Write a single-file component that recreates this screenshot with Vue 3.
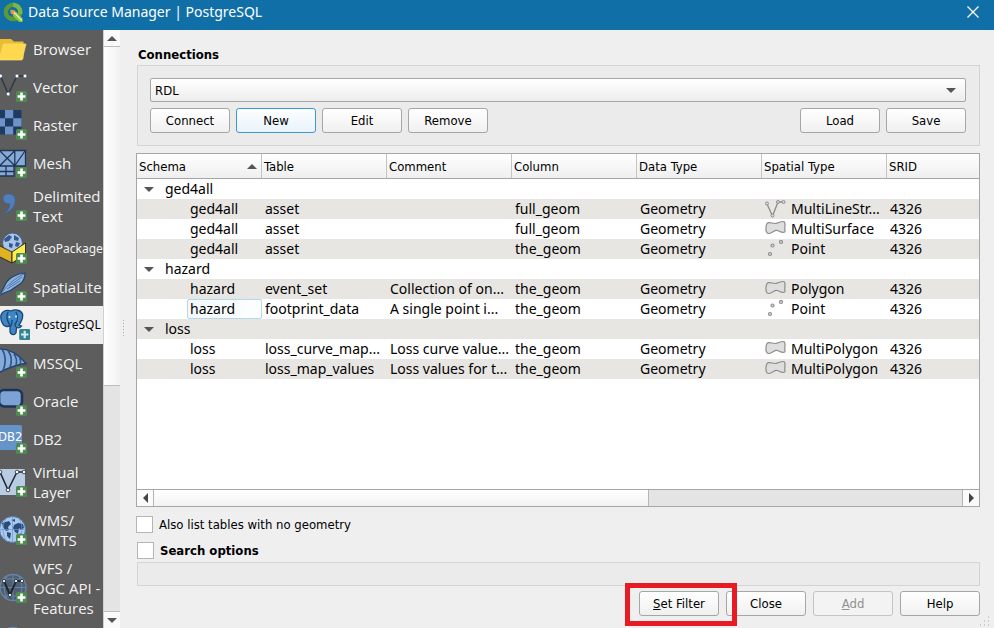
<script setup>
import { ref } from 'vue'

const sources = [
  { icon: 'browser', label: ['Browser'] },
  { icon: 'vector', label: ['Vector'], plus: true },
  { icon: 'raster', label: ['Raster'], plus: true },
  { icon: 'mesh', label: ['Mesh'], plus: true },
  { icon: 'text', label: ['Delimited', 'Text'], plus: true },
  { icon: 'gpkg', label: ['GeoPackage'], plus: true, small: true },
  { icon: 'spatialite', label: ['SpatiaLite'], plus: true },
  { icon: 'postgres', label: ['PostgreSQL'], small: true, active: true },
  { icon: 'mssql', label: ['MSSQL'], plus: true },
  { icon: 'oracle', label: ['Oracle'], plus: true },
  { icon: 'db2', label: ['DB2'], plus: true },
  { icon: 'virtual', label: ['Virtual', 'Layer'], plus: true },
  { icon: 'wms', label: ['WMS/', 'WMTS'], plus: true },
  { icon: 'wfs', label: ['WFS /', 'OGC API -', 'Features'], plus: true },
  { icon: 'wcs', label: [] },
]

const columns = ['Schema', 'Table', 'Comment', 'Column', 'Data Type', 'Spatial Type', 'SRID']

const rows = [
  { group: 'ged4all' },
  { cells: ['ged4all', 'asset', '', 'full_geom', 'Geometry', 'MultiLineStr...', '4326'], shape: 'line' },
  { cells: ['ged4all', 'asset', '', 'full_geom', 'Geometry', 'MultiSurface', '4326'], shape: 'polygon' },
  { cells: ['ged4all', 'asset', '', 'the_geom', 'Geometry', 'Point', '4326'], shape: 'point' },
  { group: 'hazard' },
  { cells: ['hazard', 'event_set', 'Collection of on...', 'the_geom', 'Geometry', 'Polygon', '4326'], shape: 'polygon' },
  { cells: ['hazard', 'footprint_data', 'A single point i...', 'the_geom', 'Geometry', 'Point', '4326'], shape: 'point', current: true },
  { group: 'loss' },
  { cells: ['loss', 'loss_curve_map...', 'Loss curve value...', 'the_geom', 'Geometry', 'MultiPolygon', '4326'], shape: 'polygon' },
  { cells: ['loss', 'loss_map_values', 'Loss values for t...', 'the_geom', 'Geometry', 'MultiPolygon', '4326'], shape: 'polygon' },
]

const connection = ref('RDL')
const noGeometry = ref(false)
const searchOptions = ref(false)
</script>

<template>
  <div class="window">
    <header class="titlebar">
      <svg class="logo" viewBox="0 0 20 20" aria-hidden="true">
        <circle cx="10" cy="10" r="7.200" fill="none" stroke="#5b9b35" stroke-width="4.200" />
        <path d="M10 2.800A7.200 7.200 0 0 1 17 12" fill="none" stroke="#7ab648" stroke-width="4.200" />
        <path d="M10 10h3.500l6 6.500V20H16l-6-6z" fill="#8dc63f" />
        <path d="M7.500 7.500l4.500 1 1.500 3-3 1.500-3-2z" fill="#e79a3c" />
        <path d="M11 10.500l8 8" stroke="#e8edc0" stroke-width="1.200" />
      </svg>
      <h1>Data Source Manager | PostgreSQL</h1>
      <button class="close" aria-label="Close window">
        <svg viewBox="0 0 12 12"><path d="M.5.5l11 11M11.5.5l-11 11" stroke="#fff" stroke-width="1.3" /></svg>
      </button>
    </header>

    <div class="body">
      <nav class="sources">
        <a v-for="s in sources" :key="s.icon" href="#" class="source" :class="{ small: s.small, active: s.active }" :aria-label="s.label.length ? null : s.icon">
          <svg class="source-icon" viewBox="0 -1 30 38" aria-hidden="true">
            <g v-if="s.icon === 'browser'">
              <path d="M-2 8H11L14 10.500H23.500V28H-2z" fill="#e9bd2f" />
              <path d="M3.500 13H26L22 29H-1z" fill="#ffd84d" stroke="#f7e27c" stroke-width=".7" />
            </g>
            <g v-else-if="s.icon === 'vector'">
              <path d="M.5 7L8.200 25 17 7H25" fill="none" stroke="#2c3a49" stroke-width="1.500" />
              <g fill="#fff" stroke="#38485a" stroke-width=".6">
                <circle cx=".5" cy="7" r="1.900" /><circle cx="8.200" cy="25" r="1.900" /><circle cx="17" cy="7" r="1.900" /><circle cx="25" cy="7" r="1.900" />
              </g>
            </g>
            <g v-else-if="s.icon === 'raster'">
              <path d="M-3 3H21.500V27.500H-3z" fill="#1f3b61" />
              <path d="M5 3h8.200v8.200H5zM-3 11.200h8v8.200h-8zM13.200 11.200h8.300v8.200h-8.300zM5 19.400h8.200v8.100H5z" fill="#6d93c9" />
            </g>
            <g v-else-if="s.icon === 'mesh'" stroke="#1f3657" stroke-width="1.300">
              <path d="M-1 5.500H25.500V21H14V31H-1z" fill="#86a9d6" />
              <path d="M0 6L14.500 20.500M14.500 6L0 20.500M14.800 5.500V21M25 6L15 20.500M-1 21H15M-1 26.500H14M6 21V31" fill="none" />
            </g>
            <g v-else-if="s.icon === 'text'">
              <path d="M3 10.500C3 7.500 6 5.500 9.500 6 14 6.600 16 10 15 14.500 14 20 9.500 24 4.500 25.500 8 22.500 10 19.500 9.800 15.800 6 16 3 14 3 10.500z" fill="#527fba" stroke="#3b659e" stroke-width=".8" />
            </g>
            <g v-else-if="s.icon === 'gpkg'">
              <path d="M-1 14.500L12 9 25.500 12 12 21z" fill="#6f5a17" />
              <circle cx="12.500" cy="12" r="10" fill="#a9c6e8" stroke="#42618b" />
              <path d="M4 8l5-4 3 2-3 4-4 1zM14 4l5 3-1 3-4-1zM9 12l4 1-1 4-3-1zM16 11l4 1-2 4-3-1z" fill="#35598d" />
              <path d="M-1 14.500L12 21V32L-1 25.500z" fill="#dfb21f" stroke="#2d2d2d" />
              <path d="M12 21L25.500 12V23.500L12 32z" fill="#ffee4a" stroke="#2d2d2d" />
            </g>
            <g v-else-if="s.icon === 'spatialite'">
              <path d="M25 4C17 4.500 8 9 5 16L0 26 5 23.500C10 22.500 12 21 14 19L20 15C24 12 25 8 25 4z" fill="#8db2de" stroke="#23426b" stroke-width="1.200" />
              <path d="M24 5C15 9 7 16 0 26M22 8L9 17M20 12L7 20" fill="none" stroke="#4872a8" stroke-width=".9" />
            </g>
            <g v-else-if="s.icon === 'postgres'">
              <path d="M1 8C3 3 8 3 11 4 15 2 21 3 22.500 7 23.500 11 21 15 19 18L21.500 19C20 21 18 21 16.500 20.500L16 26C14 29 10 27.500 10 24V19L7 19.500C3 20 0 13 1 8z" fill="#3e86c6" stroke="#1c4770" stroke-width="1.300" />
              <path d="M8 5C6 9 7 14 10 18M16 5C18 9 18 14 15 17L15.500 20M10 19C12 19 12 15 12 13" fill="none" stroke="#1c4770" stroke-width="1.300" />
              <circle cx="9.500" cy="10" r=".9" fill="#fff" /><circle cx="16" cy="9.500" r=".9" fill="#fff" />
              <rect x="19.200" y="22" width="11" height="11" rx="1.500" fill="#34828f" />
              <path d="M24.700 23.800v7.400M21 27.500h7.400" stroke="#c9edf2" stroke-width="2.200" />
            </g>
            <g v-else-if="s.icon === 'mssql'">
              <path d="M-2 4C8 3 18 9 26 18.500C18 19 6 24-2 28z" fill="#84abd9" stroke="#1f426d" stroke-width="1.300" />
              <path d="M2 4C6 10 6 18 3 26M8 5.500C12 11 12 17 10 22.500M14 9C17 13 17 17 16 20.500M19.500 12.500C21 15 21 17 20.500 19" fill="none" stroke="#2d568a" stroke-width="1.700" />
            </g>
            <rect v-else-if="s.icon === 'oracle'" x="-1" y="7" width="23" height="16.500" rx="5" fill="#7da2d6" stroke="#1d3557" stroke-width="2.600" />
            <g v-else-if="s.icon === 'db2'">
              <rect x="-4" y="4" width="26" height="25" rx="2" fill="#6594c9" />
              <text x="-2" y="20" class="db2-text">DB2</text>
            </g>
            <g v-else-if="s.icon === 'virtual'">
              <rect x="-3" y="5" width="28" height="26" rx="1" fill="#b9cce4" />
              <path d="M0 8L8 26 17 8H25M0 8H-3" fill="none" stroke="#202a35" stroke-width="1.600" />
              <g fill="#fff" stroke="#202a35" stroke-width=".8">
                <circle cx="0" cy="8" r="1.800" /><circle cx="8" cy="26" r="1.800" /><circle cx="17" cy="8" r="1.800" /><circle cx="24" cy="8" r="1.800" />
              </g>
            </g>
            <g v-else-if="s.icon === 'wms'">
              <circle cx="12.500" cy="17.500" r="13" fill="#a9c9ee" stroke="#4f79ae" />
              <path d="M2 11l7-2 2 3-3 3 1 3-3 1-3-4zM11 8l4-1v3zM14 13l4-2 5 1 1 4-3 2-2-2-1 6-3-2-2-4zM7 20l4 1-1 6-3-3zM19 22l3-1-1 4z" fill="#2b4c78" />
              <path d="M12.500 4.500v26M0 17.500h25M6 6Q0 17 6 29M19 6Q25 17 19 29" fill="none" stroke="#6d98cd" stroke-width=".7" />
            </g>
            <g v-else>
              <circle cx="13" cy="17.500" r="13" fill="#4f5f70" stroke="#6485ac" stroke-width="1.300" />
              <path d="M13 4.500v26M0 17.500h26M3 9h20M3 26h20M7 6Q1 17 7 29M19 6Q25 17 19 29" fill="none" stroke="#6485ac" stroke-width="1" />
              <path d="M4 11L10 25 16 11H22" fill="none" stroke="#20262d" stroke-width="2" />
              <g fill="#fff" stroke="#20262d" stroke-width=".8">
                <circle cx="4" cy="11" r="1.600" /><circle cx="10" cy="25" r="1.600" /><circle cx="16" cy="11" r="1.600" /><circle cx="22" cy="11" r="1.600" />
              </g>
            </g>
            <g v-if="s.plus">
              <rect x="16" y="22" width="11" height="11" rx="1.500" fill="#4e8b50" />
              <path d="M21.500 23.600v7.800M17.600 27.500h7.800" stroke="#fff" stroke-width="2.600" />
            </g>
          </svg>
          <span class="source-label"><span v-for="line in s.label" :key="line">{{ line }}</span></span>
        </a>
      </nav>

      <div class="vbar">
        <button class="arrow" aria-label="Scroll up"><svg viewBox="0 0 10 5"><path d="M0 5L5 0l5 5z" fill="#555" /></svg></button>
        <div class="vthumb"></div>
        <div class="vtrack"></div>
        <button class="arrow" aria-label="Scroll down"><svg viewBox="0 0 10 5"><path d="M0 0l5 5 5-5z" fill="#555" /></svg></button>
      </div>

      <div class="splitter"><span class="dots"></span></div>

      <main class="main">
        <h2>Connections</h2>
        <section class="group">
          <div class="combo">
            <select v-model="connection" aria-label="Connection"><option>RDL</option></select>
            <svg viewBox="0 0 10 5" aria-hidden="true"><path d="M0 0l5 5 5-5z" fill="#555" /></svg>
          </div>
          <div class="actions">
            <button class="btn">Connect</button>
            <button class="btn focused">New</button>
            <button class="btn">Edit</button>
            <button class="btn">Remove</button>
            <span class="spacer"></span>
            <button class="btn">Load</button>
            <button class="btn">Save</button>
          </div>
        </section>

        <div class="tree">
          <table>
            <colgroup><col v-for="(c, i) in columns" :key="c" :class="'col-' + i" /></colgroup>
            <thead>
              <tr>
                <th v-for="(c, i) in columns" :key="c" scope="col">
                  <div class="head">{{ c }}<svg v-if="i === 0" viewBox="0 0 10 5"><path d="M0 5L5 0l5 5z" fill="#555" /></svg></div>
                </th>
              </tr>
            </thead>
            <tbody>
              <tr v-for="(r, n) in rows" :key="n">
                <td v-if="r.group" :colspan="columns.length">
                  <div class="branch"><svg viewBox="0 0 10 5"><path d="M0 0l5 5 5-5z" fill="#555" /></svg>{{ r.group }}</div>
                </td>
                <template v-else>
                  <td v-for="(c, i) in r.cells" :key="i">
                    <div class="cell" :class="{ leaf: i === 0, current: i === 0 && r.current }">
                      <svg v-if="i === 5" class="shape" viewBox="0 0 22 18" aria-hidden="true">
                        <g v-if="r.shape === 'line'" fill="none" stroke="#8d8d8d">
                          <path d="M2 4L7.500 16 13 2H18" stroke-width="1.300" />
                          <g fill="#ddd"><circle cx="2" cy="3.500" r="1.500" /><circle cx="7.500" cy="15.500" r="1.500" /><circle cx="13" cy="2" r="1.500" /><circle cx="18.500" cy="2" r="1.500" /></g>
                        </g>
                        <path v-else-if="r.shape === 'polygon'" d="M2 3.500C4 1.500 7 3.500 10 3.500 14 3.500 17 0 19.500 2 21 4.500 19 8 20 11.500 18.500 14 15 11.500 12.500 10.500 9 9.500 8 13 4 13.500 0 14 .5 6 2 3.500z" fill="#dedede" stroke="#8d8d8d" stroke-width="1.200" />
                        <g v-else fill="#ddd" stroke="#8d8d8d" stroke-width="1.200"><circle cx="5" cy="14" r="1.500" /><circle cx="7.500" cy="5.500" r="1.500" /><circle cx="16" cy="2" r="1.500" /></g>
                      </svg>{{ c }}
                    </div>
                  </td>
                </template>
              </tr>
            </tbody>
          </table>
          <div class="hbar">
            <button class="arrow" aria-label="Scroll left"><svg viewBox="0 0 5 10"><path d="M5 0L0 5l5 5z" fill="#444" /></svg></button>
            <div class="hthumb"></div>
            <div class="htrack"></div>
            <button class="arrow" aria-label="Scroll right"><svg viewBox="0 0 5 10"><path d="M0 0l5 5-5 5z" fill="#444" /></svg></button>
          </div>
        </div>

        <label class="check"><input v-model="noGeometry" type="checkbox" />Also list tables with no geometry</label>
        <label class="check strong"><input v-model="searchOptions" type="checkbox" />Search options</label>
        <div class="search-box"></div>

        <footer class="footer">
          <span class="marked"><button class="btn"><u>S</u>et Filter</button></span>
          <button class="btn">Close</button>
          <button class="btn" disabled><u>A</u>dd</button>
          <button class="btn">Help</button>
        </footer>
      </main>
      <svg class="grip" viewBox="0 0 12 12" aria-hidden="true">
        <path d="M9 1h1M9 5h1M5 5h1M9 9h1M5 9h1M1 9h1" stroke="#aaa" stroke-width="1" />
      </svg>
    </div>
  </div>
</template>

<style>
body { margin: 0; overflow: hidden; }
</style>

<style scoped>
* { box-sizing: border-box; }
.window {
  display: flex;
  flex-direction: column;
  height: 100vh;
  background: #efefef;
  color: #000;
  font-family: "DejaVu Sans Condensed", "Noto Sans", sans-serif;
  font-size: 13px;
}
button { font: inherit; color: inherit; padding: 0; }
.titlebar {
  flex: none;
  display: flex;
  align-items: center;
  height: 30px;
  padding: 0 15px 6px 3px;
  background: #116fa8;
  color: #fff;
}
.logo { width: 20px; height: 20px; margin-right: 5px; }
h1 { flex: 1; margin: 0; font: 400 14px/20px "Noto Sans", sans-serif; }
.close { display: flex; border: 0; background: none; }
.close svg { width: 12px; height: 12px; }

.body { position: relative; flex: 1; display: flex; min-height: 0; }
.sources {
  flex: none;
  width: 103px;
  overflow: hidden;
  background: #5d5d5d;
  font: 15px/20px "Open Sans", sans-serif;
}
.source {
  display: flex;
  align-items: center;
  min-height: 38px;
  padding: 4px 0;
  gap: 3px;
  color: #f2f2f2;
  text-decoration: none;
  white-space: nowrap;
}
.source-icon { flex: none; width: 30px; height: 38px; margin: -4px 0; }
.source-label { display: flex; flex-direction: column; }
.small { font-family: "Noto Sans", sans-serif; font-size: 12px; }
.active { background: #efefef; color: #000; gap: 5px; }
.db2-text { font: 13px "DejaVu Sans Condensed", sans-serif; fill: #fff; }

.vbar {
  flex: none;
  display: flex;
  flex-direction: column;
  width: 17px;
  border-left: 1px solid #d0d0d0;
}
.arrow {
  flex: none;
  display: flex;
  align-items: center;
  justify-content: center;
  width: 16px;
  height: 16px;
  border: 0;
  background: #fafafa;
}
.vbar .arrow svg { width: 10px; height: 5px; }
.vthumb {
  flex: 3;
  border: solid #bdbdbd;
  border-width: 1px 0;
  background: linear-gradient(90deg, #fff, #f2f2f2);
}
.vtrack { flex: 2; border-bottom: 1px solid #bdbdbd; background: #e4e4e4; }
.splitter { flex: none; display: flex; align-items: center; width: 16px; padding-left: 3px; }
.dots {
  width: 1px;
  height: 18px;
  background: repeating-linear-gradient(#aaa 0 1px, transparent 1px 3px);
}

.main { flex: 1; display: flex; flex-direction: column; min-width: 0; padding: 16px 14px 12px 0; }
h2 { margin: 0 0 2px 2px; font-size: 13px; line-height: 17px; }
.group {
  margin-left: 1px;
  padding: 12px 13px 12px 12px;
  border: 1px solid #d4d4d4;
  background: #ebebeb;
}
.combo { position: relative; }
.combo select {
  display: block;
  width: 100%;
  height: 24px;
  padding: 0 4px;
  appearance: none;
  border: 1px solid #a6a6a6;
  border-radius: 2px;
  background: linear-gradient(#fff, #ededed);
  color: #000;
  font: inherit;
}
.combo svg { position: absolute; right: 10px; top: 10px; width: 10px; height: 5px; pointer-events: none; }
.actions { display: flex; gap: 6px; margin-top: 6px; }
.spacer { flex: 1; }
.btn {
  width: 80px;
  height: 25px;
  border: 1px solid #a6a6a6;
  border-radius: 3px;
  background: linear-gradient(#fff, #f0f0f0);
}
.btn.focused { border-color: #3c9ad0; background: linear-gradient(#fdfeff, #e8f3fa); }
.btn:disabled { border-color: #c4c4c4; color: #909090; background: #f3f3f3; }

.tree {
  flex: 1;
  display: flex;
  flex-direction: column;
  justify-content: space-between;
  min-height: 0;
  margin: 7px 0 8px;
  border: 1px solid #a6a6a6;
  background: #fff;
}
table { width: 100%; table-layout: fixed; border-collapse: collapse; }
.col-0, .col-1, .col-2, .col-3, .col-4, .col-5 { width: 125px; }
th { padding: 0; font-weight: 400; text-align: left; background: linear-gradient(#fff, #efefef); border-bottom: 1px solid #a6a6a6; }
.head {
  display: flex;
  align-items: center;
  justify-content: space-between;
  height: 24px;
  padding: 1px 4px 0 2px;
  border-right: 1px solid #c4c4c4;
}
th:last-child .head { border-right: 0; }
.head svg { width: 10px; height: 5px; }
td { padding: 0; }
tbody { font: 14px/20px "Noto Sans", sans-serif; }
tbody tr:nth-child(even) { background: #e8e6e3; }
.branch { display: flex; align-items: center; gap: 11px; padding-left: 7px; }
.branch svg { width: 10px; height: 5px; }
.cell { display: flex; align-items: center; height: 20px; padding-left: 3px; white-space: nowrap; }
.leaf { margin-left: 50px; }
.current { border: 1px solid #b5d7ea; border-radius: 2px; padding-left: 2px; background: linear-gradient(90deg, #f2f9fd, #fdfeff); }
.shape { width: 22px; height: 18px; margin-right: 4px; }
.hbar { display: flex; flex: none; height: 17px; border-top: 1px solid #a6a6a6; }
.hbar .arrow svg { width: 5px; height: 10px; }
.hthumb { flex: 612; border: solid #b5b5b5; border-width: 0 1px; background: linear-gradient(#fff, #f2f2f2); }
.htrack { flex: 388; border-right: 1px solid #b5b5b5; background: #e4e4e4; }

.check { display: flex; align-items: center; gap: 6px; height: 18px; margin-bottom: 8px; }
.check input {
  width: 17px;
  height: 17px;
  margin: 0;
  appearance: none;
  border: 1px solid #b5b5b5;
  background: #fff;
}
.check input:checked { background: #3c9ad0; }
.strong { margin: 0 0 3px 1px; font-weight: 700; }
.search-box { height: 24px; margin-left: 1px; border: 1px solid #d4d4d4; background: #ebebeb; }
.footer { display: flex; justify-content: flex-end; gap: 7px; margin-top: 5px; }
.marked { position: relative; }
.marked::after {
  content: "";
  position: absolute;
  inset: -8px -18px -10px -14px;
  border: 5px solid #e61b23;
  pointer-events: none;
  z-index: 1;
}
.grip { position: absolute; right: 3px; bottom: 0; width: 12px; height: 12px; }
</style>
